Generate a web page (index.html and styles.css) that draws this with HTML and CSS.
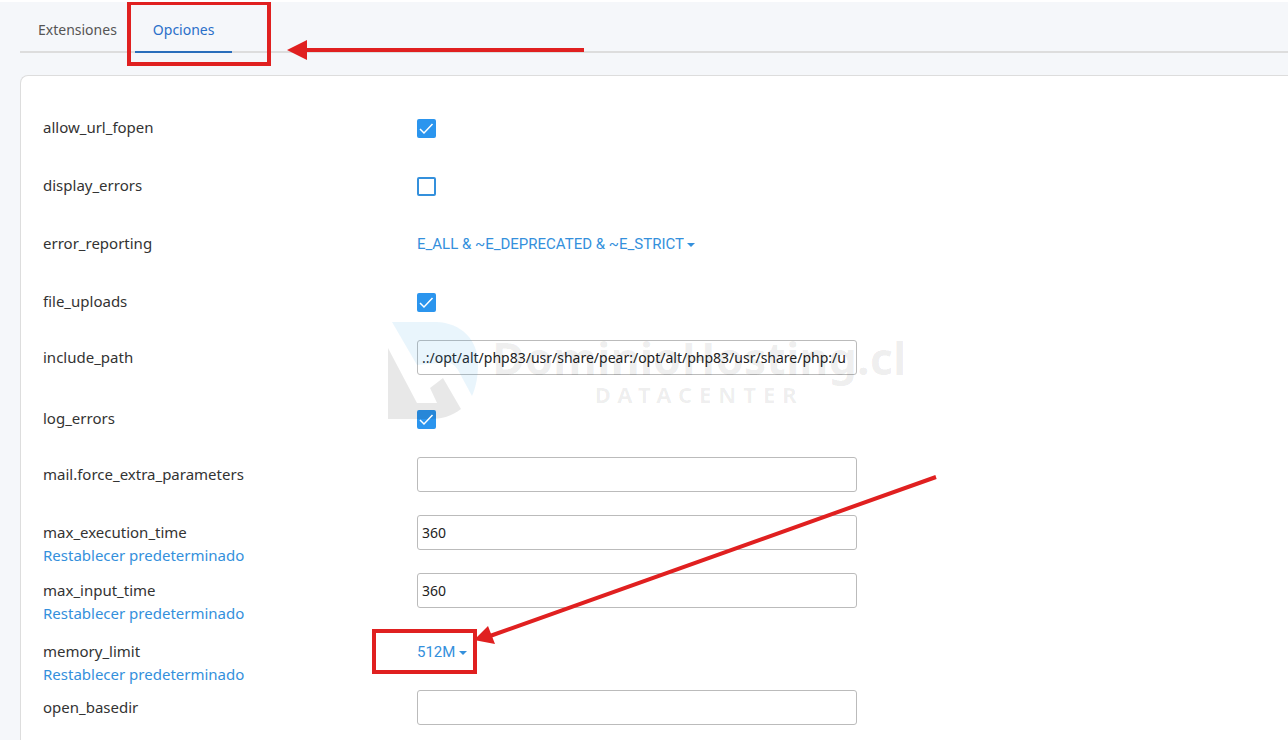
FILE: index.html
```
<!DOCTYPE html>
<html lang="es">
<head>
  <meta charset="utf-8">
  <title>Opciones PHP</title>

  <link rel="stylesheet" href="styles.css">
</head>

<body>
  <nav class="tabs">
    <a class="tab" href="#extensiones">Extensiones</a>
    <a class="tab tab-active" href="#opciones">Opciones</a>
  </nav>

  <main class="card">

    <div class="row row-text">
      <div class="name"><label for="allow_url_fopen">allow_url_fopen</label></div>
      <div class="check">
        <input type="checkbox" id="allow_url_fopen" checked>
        <svg class="tick" viewBox="0 0 19 19"><path d="M3 10l4 4 8.500-9"/></svg>
      </div>
    </div>

    <div class="row row-text">
      <div class="name"><label for="display_errors">display_errors</label></div>
      <div class="check">
        <input type="checkbox" id="display_errors">
        <svg class="tick" viewBox="0 0 19 19"><path d="M3 10l4 4 8.500-9"/></svg>
      </div>
    </div>

    <div class="row row-text">
      <div class="name"><label for="error_reporting">error_reporting</label></div>
      <div class="dropdown">
        <select id="error_reporting">
          <option>E_ALL &amp; ~E_DEPRECATED &amp; ~E_STRICT</option>
        </select>
        <svg class="caret" viewBox="0 0 8 4"><path d="M0 0h8L4 4z"/></svg>
      </div>
    </div>

    <div class="row row-text">
      <div class="name"><label for="file_uploads">file_uploads</label></div>
      <div class="check">
        <input type="checkbox" id="file_uploads" checked>
        <svg class="tick" viewBox="0 0 19 19"><path d="M3 10l4 4 8.500-9"/></svg>
      </div>
    </div>

    <div class="row row-input">
      <div class="name"><label for="include_path">include_path</label></div>
      <input class="field" type="text" id="include_path" value=".:/opt/alt/php83/usr/share/pear:/opt/alt/php83/usr/share/php:/u">
    </div>

    <div class="row row-text">
      <div class="name"><label for="log_errors">log_errors</label></div>
      <div class="check">
        <input type="checkbox" id="log_errors" checked>
        <svg class="tick" viewBox="0 0 19 19"><path d="M3 10l4 4 8.500-9"/></svg>
      </div>
    </div>

    <div class="row row-input">
      <div class="name"><label for="mail_params">mail.force_extra_parameters</label></div>
      <input class="field" type="text" id="mail_params">
    </div>

    <div class="row row-input">
      <div class="name">
        <label for="max_execution_time">max_execution_time</label>
        <a class="reset" href="#reset">Restablecer predeterminado</a>
      </div>
      <input class="field" type="text" id="max_execution_time" value="360">
    </div>

    <div class="row row-input">
      <div class="name">
        <label for="max_input_time">max_input_time</label>
        <a class="reset" href="#reset">Restablecer predeterminado</a>
      </div>
      <input class="field" type="text" id="max_input_time" value="360">
    </div>

    <div class="row row-text">
      <div class="name">
        <label for="memory_limit">memory_limit</label>
        <a class="reset" href="#reset">Restablecer predeterminado</a>
      </div>
      <div class="dropdown">
        <select id="memory_limit">
          <option>512M</option>
        </select>
        <svg class="caret" viewBox="0 0 8 4"><path d="M0 0h8L4 4z"/></svg>
      </div>
    </div>

    <div class="row row-input">
      <div class="name"><label for="open_basedir">open_basedir</label></div>
      <input class="field" type="text" id="open_basedir">
    </div>

  </main>

  <!-- watermark -->
  <div class="watermark">
    <svg class="watermark-logo" viewBox="0 0 92 100">
      <path class="logo-blue" d="M4 2H48C74 3 90 20 90 44C90 56 88 67 84 76L70 50C65 42 57 41 50 43L29 45Z"/>
      <path class="logo-gray" d="M0 28L29 83H49L42 68L55 58L73 89C64 96 54 99 42 99H0Z"/>
    </svg>
    <div class="watermark-text">
      <div class="watermark-name">DominioHosting.cl</div>
      <div class="watermark-sub">DATACENTER</div>
    </div>
  </div>

  <!-- red boxes and arrows -->
  <svg class="marks" width="960" height="700" viewBox="0 0 960 700">
    <rect x="129" y="3" width="140" height="61"/>
    <rect x="374" y="631" width="101" height="41"/>
    <path d="M304 50H584M490 636L936 477"/>
    <path class="head" d="M287 50L307 40V60ZM474 640L488 626L495 644Z"/>
  </svg>
</body>
</html>
```
FILE: styles.css
```
*
{
  box-sizing: border-box;
}

body
{
  margin: 0;
  min-height: 100vh;
  padding-left: 20px;
  border-top: 2px solid white;
  background-color: #f5f7fa;
  color: #333;
  font-family: "Noto Sans", sans-serif;
  font-size: 15px;
  line-height: 23px;

  display: flex;
  flex-direction: column;
  position: relative;
}

a
{
  text-decoration: none;
}

.tabs
{
  display: flex;
  border-bottom: 2px solid #ddd;
  font-size: 14px;
}

.tab
{
  color: #555;
  padding: 16px 18px 10px;
  margin-bottom: -2px;
  border-bottom: 2px solid transparent;
}

.tab-active
{
  color: #2a6fc9;
  border-bottom-color: #2a6ebb;
}

.card
{
  flex: 1;
  margin-top: 22px;
  padding: 24px 22px 0;
  background-color: white;
  border: 1px solid #ddd;
  border-right: none;
  border-bottom: none;
  border-top-left-radius: 8px;
}

.row
{
  height: 58px;
  display: flex;
  align-items: flex-start;
}

.row-text
{
  padding-top: 16px;
}

.row-input
{
  padding-top: 14px;
}

.row-input + .row-text
{
  margin-top: 1px;
}

.name
{
  flex: 0 0 374px;
  display: flex;
  flex-direction: column;
  align-items: flex-start;
}

.reset
{
  color: #3490dc;
}

.check
{
  display: grid;
  margin-top: 3px;
}

.check input
{
  appearance: none;
  grid-area: 1 / 1;
  width: 19px;
  height: 19px;
  margin: 0;
  border: 2px solid #3490dc;
  border-radius: 2px;
  background-color: white;
}

.check input:checked
{
  background-color: #2b95ee;
  border-color: #2b95ee;
}

.tick
{
  grid-area: 1 / 1;
  width: 19px;
  height: 19px;
  fill: none;
  stroke: white;
  stroke-width: 1.5;
  pointer-events: none;
  z-index: 1;
}

.dropdown
{
  display: flex;
  align-items: center;
  gap: 3px;
  margin-top: 1px;
}

.dropdown select
{
  appearance: none;
  padding: 0;
  border: none;
  background: none;
  color: #3490dc;
  font-family: Roboto, sans-serif;
  font-size: 15px;
  line-height: 23px;
}

.caret
{
  width: 8px;
  height: 4px;
  fill: #3490dc;
}

.field
{
  flex: 0 1 440px;
  min-width: 0;
  height: 35px;
  margin-top: -6px;
  padding: 0 4px;
  border: 1px solid #bbb;
  border-radius: 3px;
  background-color: white;
  color: #222;
  font-family: "Noto Sans", sans-serif;
  font-size: 14px;
}

.watermark
{
  position: absolute;
  left: 388px;
  top: 318px;
  display: flex;
  gap: 12px;
  pointer-events: none;
  color: rgba(0, 0, 0, 0.07);
}

.watermark-logo
{
  width: 92px;
  height: 100px;
}

.logo-blue
{
  fill: rgba(40, 160, 225, 0.1);
}

.logo-gray
{
  fill: rgba(0, 0, 0, 0.09);
}

.watermark-text
{
  display: flex;
  flex-direction: column;
  align-items: center;
  padding-top: 14px;
  font-weight: bold;
}

.watermark-name
{
  font-size: 45px;
  line-height: 48px;
}

.watermark-sub
{
  font-size: 22px;
  line-height: 24px;
  letter-spacing: 7px;
}

.marks
{
  position: absolute;
  left: 0;
  top: -2px;
  fill: none;
  stroke: #e02020;
  stroke-width: 4;
  pointer-events: none;
}

.head
{
  fill: #e02020;
  stroke: none;
}
```
